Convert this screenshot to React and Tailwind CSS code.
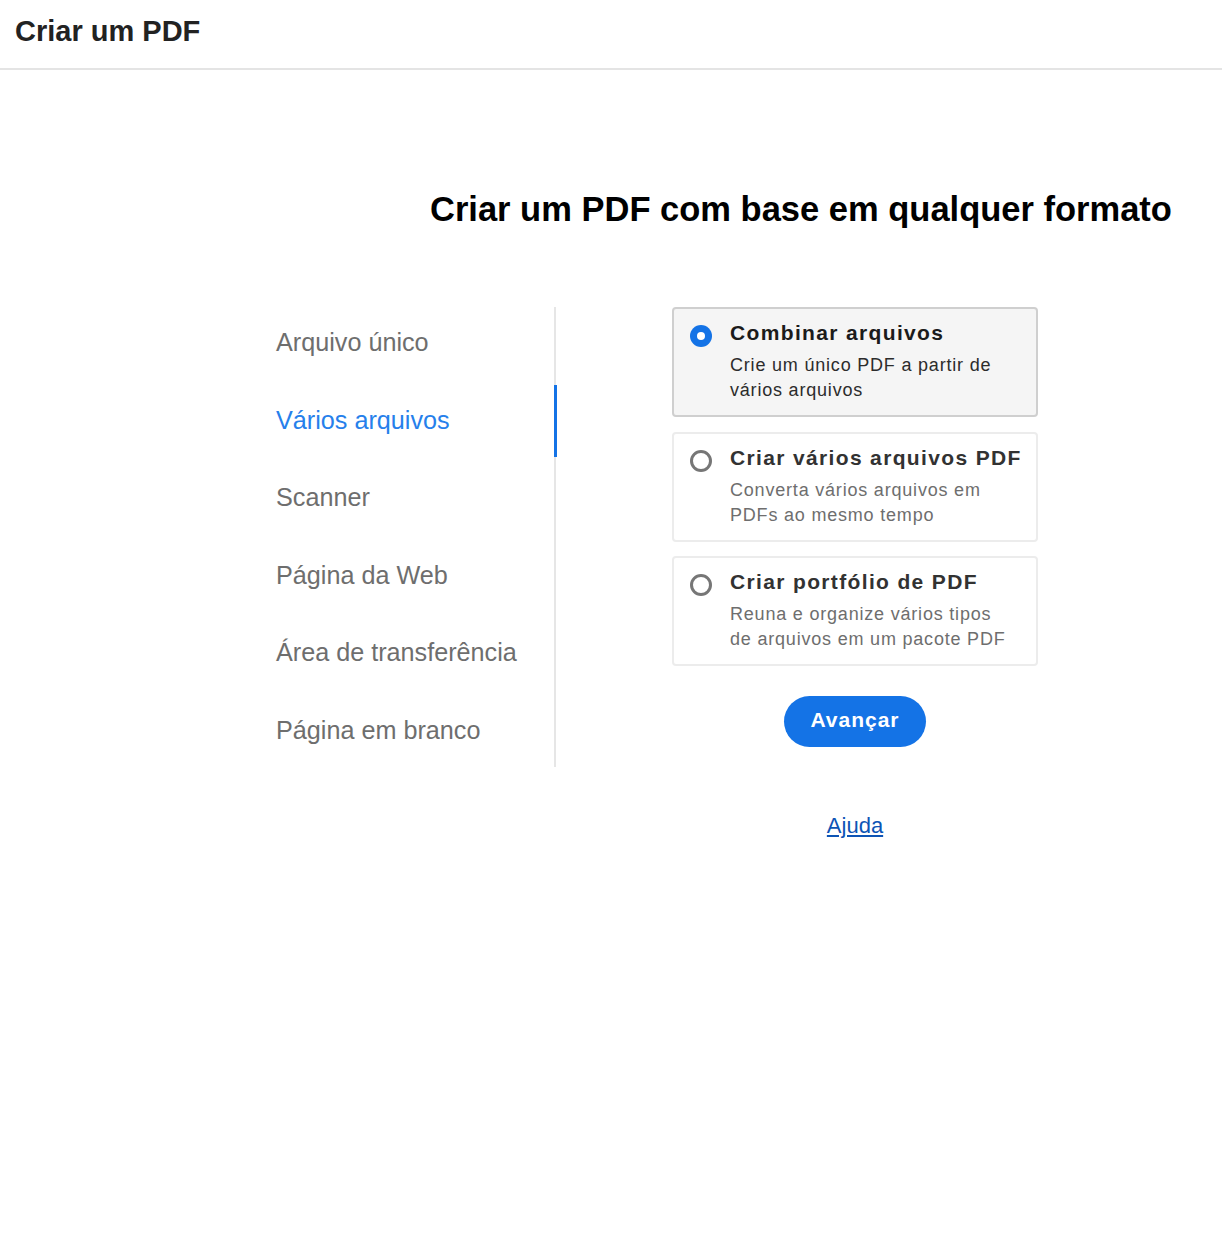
const navItems = [
  { id: 'single', label: 'Arquivo único' },
  { id: 'multi', label: 'Vários arquivos', active: true },
  { id: 'scanner', label: 'Scanner' },
  { id: 'web', label: 'Página da Web' },
  { id: 'clipboard', label: 'Área de transferência' },
  { id: 'blank', label: 'Página em branco' },
];

const options = [
  {
    id: 'combine',
    title: 'Combinar arquivos',
    desc: ['Crie um único PDF a partir de', 'vários arquivos'],
    selected: true,
  },
  {
    id: 'multiple',
    title: 'Criar vários arquivos PDF',
    desc: ['Converta vários arquivos em', 'PDFs ao mesmo tempo'],
  },
  {
    id: 'portfolio',
    title: 'Criar portfólio de PDF',
    desc: ['Reuna e organize vários tipos', 'de arquivos em um pacote PDF'],
  },
];

function Radio({ checked }) {
  if (checked) {
    return (
      <span className="mt-[6px] flex h-[22px] w-[22px] shrink-0 items-center justify-center rounded-full bg-[#1473e6]">
        <span className="h-[8px] w-[8px] rounded-full bg-white" />
      </span>
    );
  }
  return (
    <span className="mt-[6px] h-[22px] w-[22px] shrink-0 rounded-full border-[3px] border-[#767676] bg-white" />
  );
}

export default function App() {
  return (
    <div className="min-h-[1256px] bg-white font-['Liberation_Sans',Arial,sans-serif]">
      {/* Top bar */}
      <header className="flex h-[70px] items-center border-b-2 border-[#e4e4e4] px-[15px] pb-[4px]">
        <h1 className="text-[29px] font-bold text-[#222]">Criar um PDF</h1>
      </header>

      <main>
        <h2 className="ml-[430px] mt-[119px] text-[34.5px] font-bold leading-[40px] text-black">
          Criar um PDF com base em qualquer formato
        </h2>

        <div className="mt-[78px] flex items-start">
          {/* Left nav */}
          <nav className="ml-[276px] flex w-[280px] flex-col gap-[5.6px] border-r-2 border-[#e6e6e6]">
            {navItems.map((item) => (
              <div key={item.id} className="relative flex h-[72px] items-center">
                <span
                  className={`text-[25.2px] ${
                    item.active ? 'text-[#2680eb]' : 'text-[#6e6e6e]'
                  }`}
                >
                  {item.label}
                </span>
                {item.active && (
                  <span className="absolute -right-[2.5px] top-0 h-[72px] w-[3px] bg-[#1473e6]" />
                )}
              </div>
            ))}
          </nav>

          {/* Options */}
          <div className="ml-[116px] flex w-[366px] flex-col items-center">
            <div className="flex w-full flex-col gap-[14.5px]">
              {options.map((opt) => (
                <div
                  key={opt.id}
                  className={`flex h-[110px] gap-[18px] rounded-[4px] border-2 pl-[16px] pt-[10px] ${
                    opt.selected
                      ? 'border-[#cfcfcf] bg-[#f5f5f5]'
                      : 'border-[#ececec] bg-white'
                  }`}
                >
                  <Radio checked={opt.selected} />
                  <div>
                    <p
                      className={`text-[21px] font-bold leading-[28px] tracking-[1.35px] ${
                        opt.selected ? 'text-[#1b1b1b]' : 'text-[#323232]'
                      }`}
                    >
                      {opt.title}
                    </p>
                    <p
                      className={`mt-[6px] text-[18px] leading-[25px] tracking-[0.8px] ${
                        opt.selected ? 'text-[#2c2c2c]' : 'text-[#6e6e6e]'
                      }`}
                    >
                      {opt.desc[0]}
                      <br />
                      {opt.desc[1]}
                    </p>
                  </div>
                </div>
              ))}
            </div>

            <button className="mt-[30px] h-[51px] w-[142px] rounded-full bg-[#1473e6] pb-[3px] text-[21px] font-bold tracking-[1px] text-white">
              Avançar
            </button>

            <a
              href="#"
              className="mt-[67px] text-[22px] leading-[24px] text-[#0d54b5] underline"
            >
              Ajuda
            </a>
          </div>
        </div>
      </main>
    </div>
  );
}
